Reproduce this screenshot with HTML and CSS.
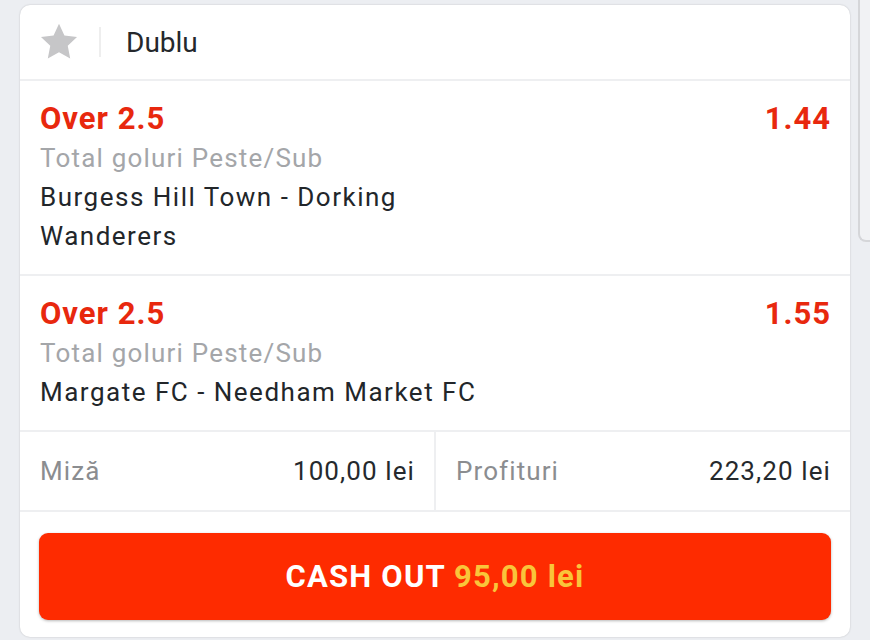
FILE: index.html
```html
<!DOCTYPE html>
<html>
<head>
<meta charset="utf-8">
<link rel="stylesheet" href="styles.css">
</head>
<body>
<div class="page">
  <div class="card">
    <div class="header">
      <svg class="star" width="42" height="42" viewBox="0 0 24 24"><path d="M12 1.6l3.1 6.7 7.2.9-5.3 5 1.4 7.2L12 17.9l-6.4 3.5 1.4-7.2-5.3-5 7.2-.9z" fill="#c6c6c8"/></svg>
      <div class="vsep"></div>
      <div class="title">Dublu</div>
    </div>
    <div class="sel">
      <div class="sel-top"><span class="pick">Over 2.5</span><span class="odd">1.44</span></div>
      <div class="market">Total goluri Peste/Sub</div>
      <div class="match">Burgess Hill Town - Dorking<br>Wanderers</div>
    </div>
    <div class="sel">
      <div class="sel-top"><span class="pick">Over 2.5</span><span class="odd">1.55</span></div>
      <div class="market">Total goluri Peste/Sub</div>
      <div class="match">Margate FC - Needham Market FC</div>
    </div>
    <div class="stats">
      <div class="stat"><span class="label">Miză</span><span class="val">100,00 lei</span></div>
      <div class="stat"><span class="label">Profituri</span><span class="val">223,20 lei</span></div>
    </div>
    <div class="action">
      <button class="cashout">CASH OUT <span class="amount">95,00 lei</span></button>
    </div>
  </div>
  <div class="side"></div>
</div>
</body>
</html>
```
FILE: styles.css
```css
html, body {
  margin: 0;
  padding: 0;
  background: #eceef2;
  font-family: Roboto, "Noto Sans", sans-serif;
}
.page {
  display: flex;
  align-items: flex-start;
  padding: 5px 0 0 20px;
  gap: 8px;
  height: 635px;
  overflow: hidden;
}
.card {
  width: 830px;
  flex: none;
  background: #fff;
  border-radius: 10px;
  box-shadow: 0 0 2px rgba(0,0,0,0.2);
  overflow: hidden;
}
.header {
  height: 76px;
  display: flex;
  align-items: center;
  padding-left: 18px;
  border-bottom: 2px solid #eeeff1;
  box-sizing: border-box;
}
.star { display: block; }
.vsep {
  width: 2px;
  height: 30px;
  background: #eeeeee;
  margin-left: 19px;
}
.title {
  margin-left: 25px;
  font-size: 28px;
  color: #25282c;
}
.sel {
  padding: 17px 20px 18px 20px;
  border-bottom: 2px solid #eeeff1;
}
.sel-top {
  display: flex;
  justify-content: space-between;
  align-items: center;
  height: 40px;
}
.pick, .odd {
  font-size: 31px;
  font-weight: 700;
  letter-spacing: 1px;
  color: #e8280e;
}
.odd { margin-right: -1px; }
.market {
  font-size: 26px;
  letter-spacing: 1.2px;
  line-height: 40px;
  color: #a4a6a9;
}
.match {
  font-size: 26px;
  letter-spacing: 1.5px;
  line-height: 39px;
  color: #22262a;
}
.stats {
  display: flex;
  height: 80px;
  border-bottom: 2px solid #eeeff1;
  box-sizing: border-box;
}
.stat {
  flex: 1;
  display: flex;
  align-items: center;
  justify-content: space-between;
  padding: 0 19px 0 20px;
  font-size: 26px;
  letter-spacing: 1.1px;
}
.stat + .stat {
  border-left: 2px solid #eeeff1;
}
.label { color: #8b8d90; }
.val { color: #25292d; }
.action {
  padding: 21px 19px 17px 19px;
}
.cashout {
  display: block;
  width: 100%;
  height: 87px;
  border: none;
  border-radius: 9px;
  background: #fe2b00;
  box-shadow: 0 1px 3px rgba(0,0,0,0.28);
  color: #fff;
  font-family: Roboto, sans-serif;
  font-size: 31px;
  font-weight: 700;
  letter-spacing: 1.2px;
}
.amount { color: #f9c53a; }
.side {
  width: 12px;
  height: 240px;
  flex: none;
  margin-top: -5px;
  background: #f1f2f4;
  border-left: 2px solid #d5d6d9;
  border-bottom: 2px solid #d5d6d9;
  border-bottom-left-radius: 8px;
}
```
